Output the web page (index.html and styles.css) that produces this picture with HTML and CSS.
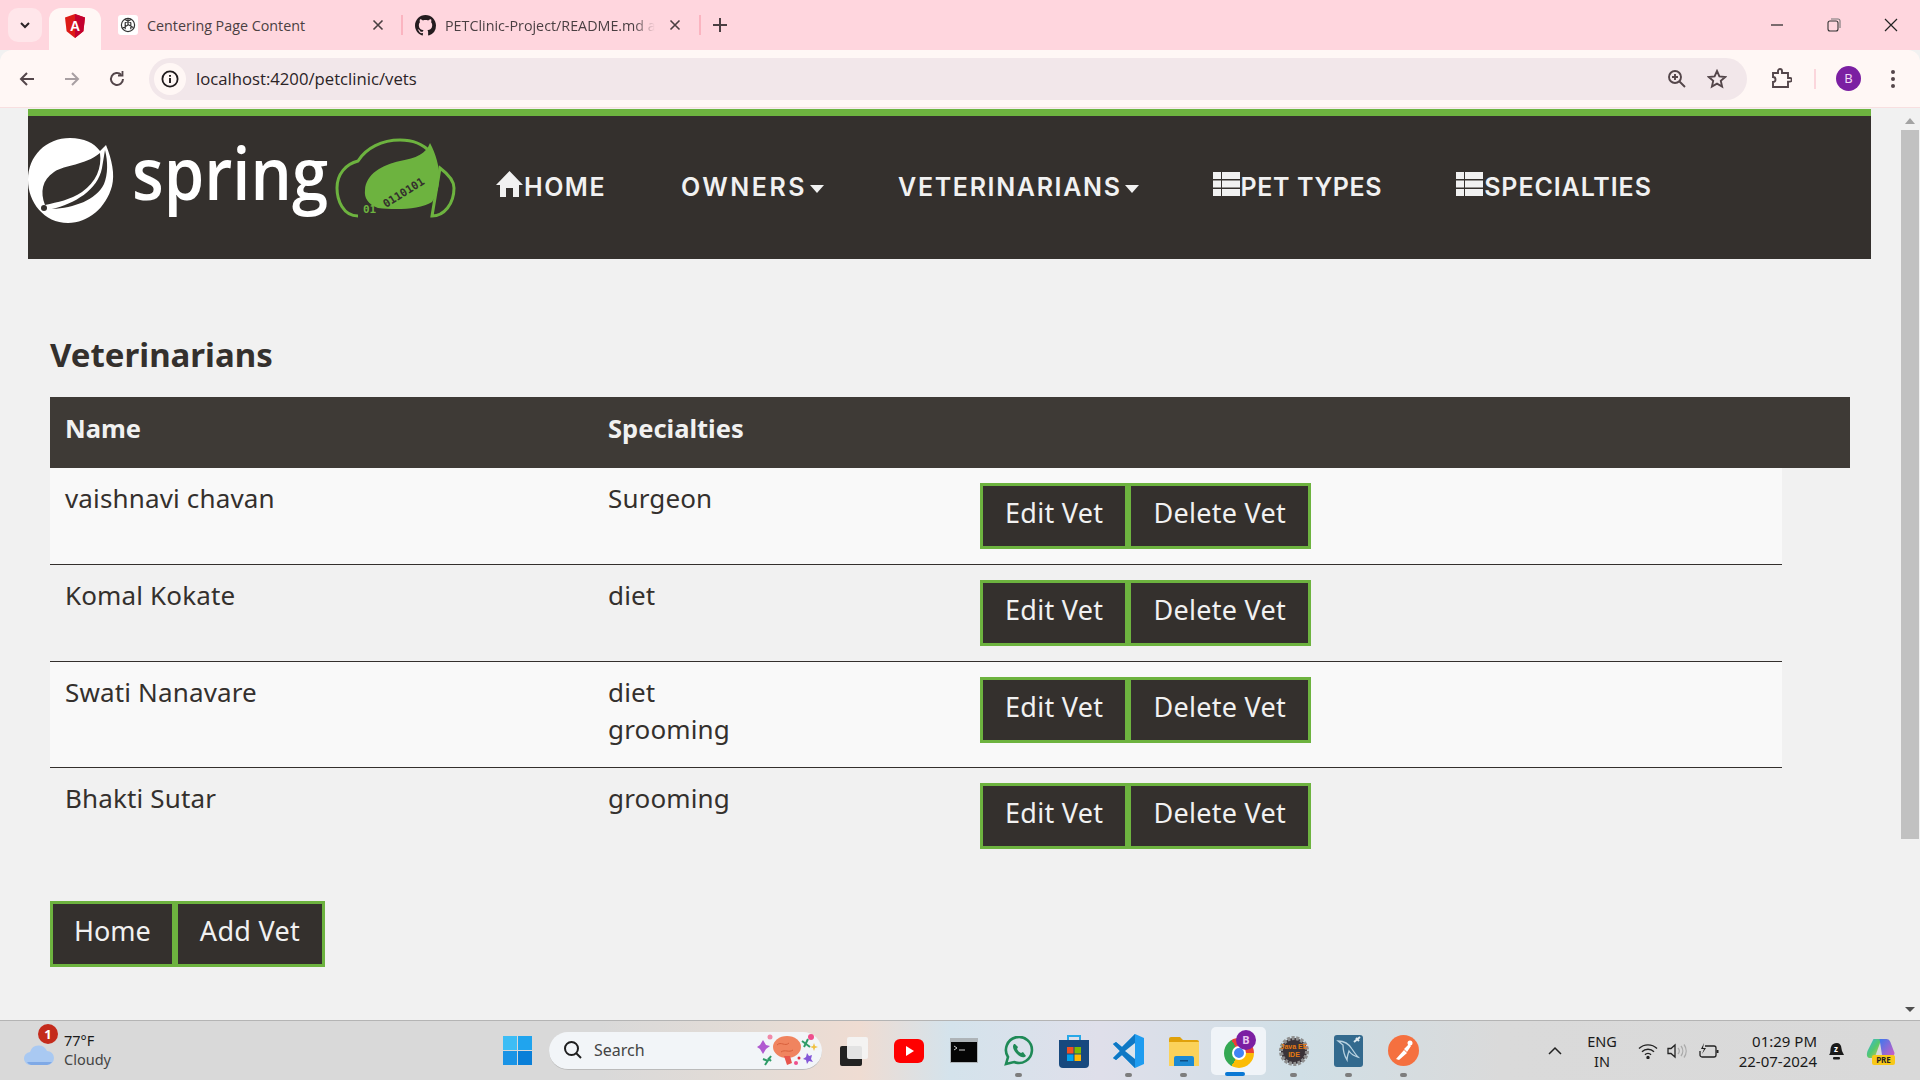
FILE: index.html
```html
<!DOCTYPE html>
<html lang="en">
<head>
    <meta charset="UTF-8">
    <title>Veterinarians</title>
    <link rel="stylesheet" href="styles.css">
</head>
<body>
    <div class="tabstrip">
        <div class="tab-menu">
            <svg width="12" height="8" viewBox="0 0 12 8"><path d="M2 2l4 4 4-4" fill="none" stroke="#2b2326" stroke-width="2"/></svg>
        </div>
        <div class="tab-active">
            <svg width="20" height="24" viewBox="0 0 20 24">
                <path d="M10 0L0 3.6l1.6 13.6L10 24l8.4-6.8L20 3.6z" fill="#dd1b16"/>
                <path d="M10 0v24l8.4-6.8L20 3.6z" fill="#c3002f"/>
                <text x="10" y="17" class="angular-a">A</text>
            </svg>
        </div>
        <div class="tab tab-first">
            <div class="favicon-box">
                <svg width="16" height="16" viewBox="0 0 16 16" fill="none" stroke="#333" stroke-width="1.2">
                    <circle cx="8" cy="8" r="6.6"/>
                    <path d="M8 1.4v6l5.2 3M8 8l-5.2 3M5 2.5l5.8 3.3v6.4M11 2.5L5.2 5.8v6.4"/>
                </svg>
            </div>
            <span class="tab-title">Centering Page Content</span>
            <svg class="tab-close" width="12" height="12" viewBox="0 0 12 12"><path d="M1.5 1.5l9 9M10.5 1.5l-9 9" stroke="#4a3f42" stroke-width="1.6"/></svg>
        </div>
        <div class="tab-divider"></div>
        <div class="tab tab-second">
            <svg width="21" height="21" viewBox="0 0 16 16"><path fill="#241c1f" d="M8 0C3.58 0 0 3.58 0 8c0 3.54 2.29 6.53 5.47 7.59.4.07.55-.17.55-.38 0-.19-.01-.82-.01-1.49-2.01.37-2.53-.49-2.69-.94-.09-.23-.48-.94-.82-1.13-.28-.15-.68-.52-.01-.53.63-.01 1.08.58 1.23.82.72 1.21 1.87.87 2.33.66.07-.52.28-.87.51-1.07-1.78-.2-3.64-.89-3.64-3.95 0-.87.31-1.59.82-2.15-.08-.2-.36-1.02.08-2.12 0 0 .67-.21 2.2.82.64-.18 1.32-.27 2-.27.68 0 1.36.09 2 .27 1.53-1.04 2.2-.82 2.2-.82.44 1.1.16 1.92.08 2.12.51.56.82 1.27.82 2.15 0 3.07-1.87 3.75-3.65 3.95.29.25.54.73.54 1.48 0 1.07-.01 1.93-.01 2.2 0 .21.15.46.55.38A8.013 8.013 0 0016 8c0-4.42-3.58-8-8-8z"/></svg>
            <span class="tab-title tab-title-fade">PETClinic-Project/README.md a</span>
            <svg class="tab-close" width="12" height="12" viewBox="0 0 12 12"><path d="M1.5 1.5l9 9M10.5 1.5l-9 9" stroke="#4a3f42" stroke-width="1.6"/></svg>
        </div>
        <div class="tab-divider"></div>
        <svg class="tab-new" width="14" height="14" viewBox="0 0 14 14"><path d="M7 0v14M0 7h14" stroke="#4a3f42" stroke-width="2"/></svg>
        <div class="window-controls">
            <svg width="14" height="14" viewBox="0 0 14 14"><path d="M1 7h12" stroke="#222" stroke-width="1.2"/></svg>
            <svg width="14" height="14" viewBox="0 0 14 14" fill="none" stroke="#333" stroke-width="1.1"><rect x="1" y="3" width="10" height="10" rx="2"/><path d="M4 1h7a2 2 0 012 2v7" stroke="#777"/></svg>
            <svg width="14" height="14" viewBox="0 0 14 14"><path d="M1 1l12 12M13 1L1 13" stroke="#222" stroke-width="1.2"/></svg>
        </div>
    </div>

    <div class="toolbar">
        <svg class="tool-btn" width="18" height="18" viewBox="0 0 18 18" fill="none" stroke="#54464a" stroke-width="2"><path d="M16 9H3M9 3L3 9l6 6"/></svg>
        <svg class="tool-btn" width="18" height="18" viewBox="0 0 18 18" fill="none" stroke="#a89fa2" stroke-width="2"><path d="M2 9h13M9 3l6 6-6 6"/></svg>
        <svg class="tool-btn" width="18" height="18" viewBox="0 0 18 18" fill="none" stroke="#54464a" stroke-width="2"><path d="M15 9a6 6 0 11-1.8-4.3"/><path d="M14.5 1v4.5H10" stroke-width="1.8"/></svg>
        <div class="omnibox">
            <div class="info-chip">
                <svg width="18" height="18" viewBox="0 0 18 18"><circle cx="9" cy="9" r="7.6" fill="none" stroke="#1f1a1c" stroke-width="1.8"/><path d="M9 8v5M9 5v1.8" stroke="#1f1a1c" stroke-width="1.9"/></svg>
            </div>
            <span class="url">localhost:4200/petclinic/vets</span>
            <svg class="omni-zoom" width="20" height="20" viewBox="0 0 20 20" fill="none" stroke="#54464a" stroke-width="1.9"><circle cx="8" cy="8" r="6"/><path d="M12.5 12.5L18 18M5 8h6M8 5v6"/></svg>
            <svg class="omni-star" width="20" height="20" viewBox="0 0 20 20" fill="none" stroke="#54464a" stroke-width="1.9"><path d="M10 2l2.4 5.4 5.8.6-4.4 3.9 1.3 5.7L10 14.7l-5.1 2.9 1.3-5.7L1.8 8l5.8-.6z"/></svg>
        </div>
        <svg class="puzzle" width="21" height="21" viewBox="0 0 21 21" fill="none" stroke="#54464a" stroke-width="1.9"><path d="M2 5h5V3a2 2 0 014 0v2h6v5h2a1.8 1.8 0 010 3.6h-2V19H2v-5a2.5 2.5 0 000-5z"/></svg>
        <div class="toolbar-divider"></div>
        <div class="avatar">B</div>
        <svg class="kebab" width="6" height="20" viewBox="0 0 6 20" fill="#54464a"><circle cx="3" cy="3" r="2"/><circle cx="3" cy="10" r="2"/><circle cx="3" cy="17" r="2"/></svg>
    </div>

    <div class="viewport">
        <div class="page">
            <nav class="navbar">
                <svg class="logo" width="427" height="85" viewBox="0 0 427 85">
                    <path fill="#fff" d="M42 0C56 0 66 5 72 13L78 7C84 22 87 36 84 48 78 70 60 85 40 85 16 85 0 64 0 42 0 18 18 0 42 0Z"/>
                    <path fill="#34302d" d="M17 67C12 54 14 42 26 34 38 26 56 28 72 15 74 30 68 44 54 54 42 62 30 64 17 67Z"/>
                    <path fill="#34302d" d="M77 12C80 24 80 36 76 46 68 62 46 70 24 71 46 66 70 52 74 30 75 24 76 18 77 12Z"/>
                    <circle cx="16" cy="70" r="3" fill="#34302d"/>
                    <text x="104" y="62" class="logo-word" textLength="196" lengthAdjust="spacingAndGlyphs">spring</text>
                    <path fill="none" stroke="#6db33f" stroke-width="3" d="M330 78C315 78 309 62 309 50 309 36 318 26 330 23 338 10 354 2 372 2 385 2 395 6 402 14M412 30C420 36 426 42 426 50 426 66 416 78 404 78Z"/>
                    <path fill="#6db33f" d="M402 5C398 16 388 20 372 23 354 27 338 36 337 52 336 60 340 66 350 70 366 72 392 72 404 64 414 50 414 28 402 5Z"/>
                    <text x="335" y="75" class="logo-bits logo-bits-out">01</text>
                    <text x="0" y="0" class="logo-bits logo-bits-in" transform="translate(358 70) rotate(-32)">0110101</text>
                </svg>
                <a class="nav-item nav-home">
                    <svg class="nav-icon" width="27" height="26" viewBox="0 0 27 26"><path fill="#f1f1f1" d="M13.5 0L27 14h-4v12h-6v-9h-7v9H4V14H0z"/></svg>HOME
                </a>
                <a class="nav-item nav-owners">OWNERS<span class="caret"></span></a>
                <a class="nav-item nav-vets">VETERINARIANS<span class="caret"></span></a>
                <a class="nav-item nav-types">
                    <svg class="nav-icon" width="27" height="24" viewBox="0 0 27 24" fill="#f1f1f1"><rect width="8" height="7"/><rect x="9" width="18" height="7"/><rect y="8.5" width="8" height="7"/><rect x="9" y="8.5" width="18" height="7"/><rect y="17" width="8" height="7"/><rect x="9" y="17" width="18" height="7"/></svg>PET TYPES
                </a>
                <a class="nav-item nav-specs">
                    <svg class="nav-icon" width="27" height="24" viewBox="0 0 27 24" fill="#f1f1f1"><rect width="8" height="7"/><rect x="9" width="18" height="7"/><rect y="8.5" width="8" height="7"/><rect x="9" y="8.5" width="18" height="7"/><rect y="17" width="8" height="7"/><rect x="9" y="17" width="18" height="7"/></svg>SPECIALTIES
                </a>
            </nav>

            <div class="content">
                <h2 class="page-title">Veterinarians</h2>
                <table class="vets-table">
                    <thead>
                        <tr>
                            <th class="col-name">Name</th>
                            <th class="col-spec">Specialties</th>
                            <th class="col-actions"></th>
                            <th class="col-extra"></th>
                        </tr>
                    </thead>
                    <tbody>
                        <tr>
                            <td>vaishnavi chavan</td>
                            <td>Surgeon</td>
                            <td class="actions"><button class="btn">Edit Vet</button><button class="btn">Delete Vet</button></td>
                        </tr>
                        <tr>
                            <td>Komal Kokate</td>
                            <td>diet</td>
                            <td class="actions"><button class="btn">Edit Vet</button><button class="btn">Delete Vet</button></td>
                        </tr>
                        <tr>
                            <td>Swati Nanavare</td>
                            <td>diet<br>grooming</td>
                            <td class="actions"><button class="btn">Edit Vet</button><button class="btn">Delete Vet</button></td>
                        </tr>
                        <tr>
                            <td>Bhakti Sutar</td>
                            <td>grooming</td>
                            <td class="actions"><button class="btn">Edit Vet</button><button class="btn">Delete Vet</button></td>
                        </tr>
                    </tbody>
                </table>
                <div class="page-actions">
                    <button class="btn btn-home">Home</button><button class="btn">Add Vet</button>
                </div>
            </div>
        </div>
        <div class="scrollbar">
            <span class="arrow-up"></span>
            <div class="thumb"></div>
            <span class="arrow-down"></span>
        </div>
    </div>

    <div class="taskbar">
        <div class="weather">
            <div class="weather-icon">
                <svg width="30" height="20" viewBox="0 0 30 20"><path fill="#a9c9f2" d="M7 20a6.500 6.500 0 01-1-13 9 9 0 0117-1 7 7 0 010 14z"/><path fill="#7fa9e6" d="M3 17h25a7 7 0 01-5 3H7a7 7 0 01-4-3z"/></svg>
                <span class="weather-badge">1</span>
            </div>
            <div class="weather-text">
                <div class="weather-temp">77°F</div>
                <div class="weather-desc">Cloudy</div>
            </div>
        </div>
        <svg class="start" width="29" height="29" viewBox="0 0 29 29">
            <rect width="14" height="14" fill="#3dbdf5"/><rect x="15" width="14" height="14" fill="#20a4ee"/>
            <rect y="15" width="14" height="14" fill="#1a94e6"/><rect x="15" y="15" width="14" height="14" fill="#0a7fd8"/>
        </svg>
        <div class="search">
            <svg width="20" height="20" viewBox="0 0 20 20" fill="none" stroke="#1e1e1e" stroke-width="2"><circle cx="8.500" cy="8.500" r="6.500"/><path d="M13 13l5 5"/></svg>
            <span class="search-label">Search</span>
            <svg class="search-art" width="62" height="34" viewBox="0 0 62 34">
                <ellipse cx="30" cy="14" rx="14" ry="11" fill="#f0845f"/>
                <path d="M20 12c4-4 8 2 12-2M24 19c4-3 8 1 12-2" stroke="#d8603c" fill="none"/>
                <path d="M27 23l6 0 2 7-5 2z" fill="#e8554c"/>
                <path d="M3 12l3-5 3 5 4 1-4 3-3 5-3-5-3-2z" fill="#b05ad0"/>
                <circle cx="13" cy="4" r="2.500" fill="#f08aa8"/>
                <path d="M8 32l6-9M6 26l5 2M14 28l-3-3" stroke="#2f9c68" stroke-width="2" fill="none"/>
                <path d="M45 8l8 6M47 14l4-8" stroke="#2f9c68" stroke-width="2"/>
                <circle cx="54" cy="4" r="3" fill="#ee4f8c"/>
                <path d="M57 10l1 3 3 1-3 1-1 3-1-3-3-1 3-1z" fill="#f0c040"/>
                <path d="M50 20l2 3 3-1-1 4 2 3-4-1-2 3-1-4-3-1 3-2z" fill="#8458d8"/>
                <circle cx="39" cy="30" r="2" fill="#ee4f8c"/>
                <circle cx="42" cy="25" r="1.500" fill="#e03040"/>
            </svg>
        </div>
        <div class="apps">
            <div class="app">
                <svg width="30" height="30" viewBox="0 0 30 30"><rect x="1" y="10" width="22" height="20" rx="2" fill="#222"/><rect x="8" y="1" width="21" height="22" rx="2" fill="#f4f4f4" opacity=".92"/></svg>
            </div>
            <div class="app">
                <svg width="30" height="24" viewBox="0 0 30 24"><rect width="30" height="24" rx="6" fill="#f00"/><path d="M12 7l8 5-8 5z" fill="#fff"/></svg>
            </div>
            <div class="app">
                <svg width="28" height="25" viewBox="0 0 28 25"><rect width="28" height="25" fill="#aeb4b8"/><rect x="1" y="4" width="26" height="20" fill="#050505"/><path d="M4 8l3 2-3 2M9 12h6" stroke="#ccc" fill="none"/></svg>
            </div>
            <div class="app running">
                <svg width="30" height="30" viewBox="0 0 30 30"><path d="M2 28l2-7A13 13 0 1110 26z" fill="none" stroke="#1f8a57" stroke-width="2.600"/><path d="M10 8c-2 2-1 6 3 10s7 4 9 2l-3-4-2 1c-2-1-3-2-4-4l1-2-3-3z" fill="#1f8a57"/></svg>
            </div>
            <div class="app">
                <svg width="30" height="34" viewBox="0 0 30 34"><path d="M9 6V2h12v4" fill="none" stroke="#28a8e8" stroke-width="2"/><path d="M0 6h30v24a4 4 0 01-4 4H4a4 4 0 01-4-4z" fill="#17497e"/><rect x="8" y="13" width="6.500" height="6.500" fill="#f25022"/><rect x="15.500" y="13" width="6.500" height="6.500" fill="#7fba00"/><rect x="8" y="20.500" width="6.500" height="6.500" fill="#00a4ef"/><rect x="15.500" y="20.500" width="6.500" height="6.500" fill="#ffb900"/></svg>
            </div>
            <div class="app running">
                <svg width="31" height="34" viewBox="0 0 31 34"><path d="M22 0l9 4v26l-9 4-13-13-6 5-3-2 7-7-7-7 3-2 6 5z" fill="#1f9cf0"/><path d="M22 0v34L9 21l-6 5-3-2 7-7-7-7 3-2 6 5z" fill="#0f78c4"/><path d="M22 9v16l-10-8z" fill="#dbe4ec"/></svg>
            </div>
            <div class="app running">
                <svg width="30" height="30" viewBox="0 0 30 30"><path d="M0 3a2 2 0 012-2h9l3 3h14a2 2 0 012 2v4H0z" fill="#e0a10a"/><path d="M0 6h30v24H0z" fill="#fbd25a"/><path d="M5 22a2 2 0 012-2h16a2 2 0 012 2v8H5z" fill="#1b8ad4"/><rect x="11" y="24" width="8" height="1.500" fill="#0c4f86"/></svg>
            </div>
            <div class="app app-active">
                <div class="chrome-icon"><span class="chrome-core"></span></div>
                <span class="chrome-badge">B</span>
            </div>
            <div class="app running">
                <svg width="30" height="30" viewBox="0 0 30 30"><circle cx="15" cy="15" r="13" fill="#3a3338" stroke="#8e8e8e" stroke-width="4" stroke-dasharray="3 1.500"/><text x="15" y="13" class="java-label">Java EE</text><text x="15" y="21" class="java-label">IDE</text></svg>
            </div>
            <div class="app running">
                <svg width="29" height="32" viewBox="0 0 29 32"><rect width="29" height="32" rx="3" fill="#336a8e"/><path d="M4 6c6 0 11 3 14 8 2 3 4 6 6 8-4-1-7-3-9-6-1 3-2 6-2 9-3-5-4-11-4-15z" fill="none" stroke="#b9d2e0" stroke-width="1.300"/><path d="M20 7l6-5M22 3l3 3" stroke="#dfe9ef" stroke-width="2"/></svg>
            </div>
            <div class="app running">
                <svg width="31" height="31" viewBox="0 0 31 31"><circle cx="15.500" cy="15.500" r="15.500" fill="#f5703f"/><path d="M8 24l8-9 3 3-8 7zM16 14l5-5 2 2-4 6z" fill="#fff"/><circle cx="22" cy="8" r="2.500" fill="#fff"/></svg>
            </div>
        </div>
        <div class="tray">
            <svg class="tray-chevron" width="14" height="9" viewBox="0 0 14 9"><path d="M1 8l6-6 6 6" fill="none" stroke="#222" stroke-width="1.500"/></svg>
            <div class="lang">ENG<br>IN</div>
            <svg class="tray-wifi" width="20" height="16" viewBox="0 0 20 16" fill="none" stroke="#222" stroke-width="1.400"><path d="M1 5.500a13 13 0 0118 0M4 8.700a8.500 8.500 0 0112 0M7 11.700a4 4 0 016 0"/><circle cx="10" cy="14.500" r="1" fill="#222"/></svg>
            <svg class="tray-volume" width="20" height="16" viewBox="0 0 20 16" fill="none" stroke="#222" stroke-width="1.300"><path d="M1 5.500h3l4-3.500v12L4 10.500H1z"/><path d="M11 5a4.500 4.500 0 010 6M14 3a8 8 0 010 10M17 1.500a11 11 0 010 13" stroke="#aaa"/></svg>
            <svg class="tray-battery" width="20" height="16" viewBox="0 0 20 16" fill="none" stroke="#222" stroke-width="1.300"><path d="M6 3h9a2 2 0 012 2v7a2 2 0 01-2 2H3a2 2 0 01-2-2V8"/><path d="M18.500 7v3" stroke-width="2"/><path d="M5 0L2 6h3l-2 5 4-6H4z" fill="#222" stroke="none"/></svg>
            <div class="clock">01:29 PM<br>22-07-2024</div>
            <svg class="tray-bell" width="17" height="20" viewBox="0 0 17 20"><path d="M1 14c2-2 1-5 2-8s3-4 6-4c2 0 3 1 4 3l1 5 2 4z" fill="#1a1a1a"/><rect x="5" y="16" width="7" height="2.500" rx="1" fill="#1a1a1a"/><text x="8" y="11" class="bell-z">z</text></svg>
            <div class="copilot">
                <svg width="29" height="21" viewBox="0 0 28 21"><defs><linearGradient id="cpA" x1="0" y1="0" x2="1" y2="1"><stop offset="0" stop-color="#32b4e8"/><stop offset=".5" stop-color="#54c86e"/><stop offset="1" stop-color="#e8c83c"/></linearGradient><linearGradient id="cpB" x1="0" y1="0" x2="1" y2="1"><stop offset="0" stop-color="#3c78ee"/><stop offset="1" stop-color="#d85cc0"/></linearGradient></defs><path d="M7 2h8L8 21H3C0 21 0 17 1 14z" fill="url(#cpA)"/><path d="M13 2h7c3 0 4 3 5 6l3 8c0 3-3 5-5 5h-7z" fill="url(#cpB)"/></svg>
                <span class="copilot-pre">PRE</span>
            </div>
        </div>
    </div>
</body>
</html>
```

FILE: styles.css
```css
* {
    box-sizing: border-box;
}
html, body {
    margin: 0;
    height: 100%;
}
body {
    display: flex;
    flex-direction: column;
    width: 1920px;
    height: 1080px;
    overflow: hidden;
    font-family: "Noto Sans", sans-serif;
    background-color: #f1f1f1;
}

/* browser tabs */
.tabstrip {
    display: flex;
    align-items: center;
    height: 50px;
    padding-left: 8px;
    background-color: #ffd6de;
}
.tab-menu {
    display: flex;
    align-items: center;
    justify-content: center;
    width: 34px;
    height: 34px;
    border-radius: 10px;
    background-color: #ffe6ea;
}
.tab-active {
    display: flex;
    align-items: center;
    justify-content: center;
    align-self: flex-end;
    width: 52px;
    height: 42px;
    margin-left: 7px;
    padding-bottom: 6px;
    border-radius: 12px 12px 0 0;
    background-color: #fff7f5;
}
.angular-a {
    font-family: "Liberation Sans", sans-serif;
    font-size: 14px;
    font-weight: 700;
    fill: #fff;
    text-anchor: middle;
}
.tab {
    display: flex;
    align-items: center;
}
.tab-first {
    width: 283px;
    margin-left: 17px;
}
.favicon-box {
    display: flex;
    align-items: center;
    justify-content: center;
    width: 20px;
    height: 20px;
    border-radius: 3px;
    background-color: #fff;
}
.tab-title {
    margin-left: 9px;
    font-family: "Open Sans", sans-serif;
    font-size: 14.3px;
    color: #4a3f42;
    white-space: nowrap;
}
.tab-first .tab-close {
    margin-left: auto;
    margin-right: 17px;
}
.tab-divider {
    width: 2px;
    height: 20px;
    background-color: #fbb4c0;
}
.tab-second {
    width: 284px;
    margin-left: 12px;
}
.tab-second .tab-title {
    width: 210px;
    -webkit-mask-image: linear-gradient(to right, #000 90%, transparent);
    mask-image: linear-gradient(to right, #000 90%, transparent);
}
.tab-second .tab-close {
    margin-left: 14px;
}
.tab-new {
    margin-left: 12px;
}
.window-controls {
    display: flex;
    gap: 43px;
    margin-left: auto;
    margin-right: 22px;
}

/* browser toolbar */
.toolbar {
    display: flex;
    align-items: center;
    height: 58px;
    padding-left: 18px;
    border-bottom: 1px solid #f8dfe0;
    border-radius: 12px 12px 0 0;
    background-color: #fff7f5;
}
.tool-btn {
    margin-right: 27px;
}
.tool-btn:nth-child(3) {
    margin-right: 23px;
}
.omnibox {
    display: flex;
    align-items: center;
    width: 1598px;
    height: 42px;
    padding-left: 5px;
    border-radius: 21px;
    background-color: #f2e7ea;
}
.info-chip {
    display: flex;
    align-items: center;
    justify-content: center;
    width: 32px;
    height: 32px;
    border-radius: 50%;
    background-color: #fff7f5;
}
.url {
    margin-left: 10px;
    font-family: "Open Sans", sans-serif;
    font-size: 16.7px;
    color: #2b2326;
}
.omni-zoom {
    margin-left: auto;
}
.omni-star {
    margin-left: 20px;
    margin-right: 20px;
}
.puzzle {
    margin-left: 24px;
}
.toolbar-divider {
    width: 2px;
    height: 20px;
    margin-left: 22px;
    background-color: #fbd6dc;
}
.avatar {
    width: 25px;
    height: 25px;
    margin-left: 20px;
    border-radius: 50%;
    font-size: 13px;
    line-height: 25px;
    text-align: center;
    color: #f0d8f4;
    background-color: #7b1fa2;
}
.kebab {
    margin-left: 29px;
}

/* page */
.viewport {
    display: flex;
    flex: 1;
    min-height: 0;
}
.page {
    flex: 1;
    padding: 1px 29px 0 28px;
}
.navbar {
    display: flex;
    height: 150px;
    border-top: 7px solid #6db33f;
    background-color: #34302d;
}
.logo {
    flex-shrink: 0;
    margin-top: 22px;
    margin-right: 3px;
    overflow: visible;
}
.nav-item {
    display: flex;
    align-items: center;
    gap: 1px;
    height: 142px;
    padding: 0 37px;
    font-family: "Inter", sans-serif;
    font-size: 25px;
    font-weight: 600;
    letter-spacing: 1.5px;
    color: #f1f1f1;
    white-space: nowrap;
}
.nav-home {
    padding-left: 38px;
    padding-right: 38px;
}
.nav-owners {
    letter-spacing: 2.5px;
}
.nav-vets {
    letter-spacing: 1.65px;
}
.nav-types {
    letter-spacing: 0.6px;
}
.nav-specs {
    letter-spacing: 0.9px;
}
.nav-icon {
    flex-shrink: 0;
    margin-top: -6px;
}
.caret {
    width: 0;
    height: 0;
    margin-left: 2px;
    margin-top: 4px;
    border-top: 8px solid #f1f1f1;
    border-left: 7px solid transparent;
    border-right: 7px solid transparent;
}
.content {
    padding: 0 21px 0 22px;
}
.page-title {
    height: 40px;
    margin: 76px 0 22px;
    font-size: 33px;
    font-weight: 700;
    line-height: 40px;
    color: #34302d;
}
.vets-table {
    width: 1800px;
    border-collapse: separate;
    border-spacing: 0;
    table-layout: fixed;
    font-size: 26px;
    letter-spacing: 0.15px;
    color: #34302d;
}
.vets-table th {
    height: 71px;
    padding: 0 15px 10px;
    font-size: 25.5px;
    font-weight: 700;
    letter-spacing: 0;
    text-align: left;
    color: #f1f1f1;
    background-color: #3e3a36;
}
.col-name {
    width: 543px;
}
.col-spec {
    width: 372px;
}
.col-extra {
    width: 68px;
}
.vets-table td {
    padding: 12px 15px 19px;
    line-height: 37px;
    vertical-align: top;
    border-bottom: 1px solid #34302d;
}
.vets-table tbody tr:nth-child(odd) td {
    background-color: #f9f9f9;
}
.vets-table tbody tr:last-child td {
    border-bottom: none;
}
.vets-table td.actions {
    padding: 15px;
    font-size: 0;
}
.btn {
    height: 66px;
    padding: 0 22px 8px;
    border: 3px solid #6db33f;
    font-family: "Noto Sans", sans-serif;
    font-size: 27px;
    letter-spacing: 0.3px;
    color: #f1f1f1;
    background-color: #34302d;
}
.btn-home {
    padding: 0 21px 8px;
    letter-spacing: 0;
}
.page-actions {
    margin-top: 37px;
    font-size: 0;
}

/* page scrollbar */
.scrollbar {
    display: flex;
    flex-direction: column;
    align-items: center;
    width: 20px;
    background-color: #f1f1f1;
}
.arrow-up, .arrow-down {
    width: 0;
    height: 0;
    margin: 8px 0;
    border-left: 5px solid transparent;
    border-right: 5px solid transparent;
}
.arrow-up {
    margin-top: 10px;
    margin-bottom: 6px;
    border-bottom: 6px solid #a3a3a3;
}
.arrow-down {
    margin-top: auto;
    border-top: 5px solid #505050;
}
.thumb {
    width: 18px;
    height: 709px;
    background-color: #c1c1c1;
}

/* windows taskbar */
.taskbar {
    display: flex;
    align-items: center;
    height: 60px;
    border-top: 1px solid #b4b4b4;
    background: linear-gradient(to right, #d9d9d9 0, #d9d9d9 600px, #e4dcd6 760px, #efdcd2 860px, #d4e3ec 950px, #dfdfea 1100px, #d0dfe6 1300px, #dadada 1500px, #d9d9d9 100%);
}
.weather {
    display: flex;
    align-items: center;
    width: 503px;
    padding-left: 24px;
}
.weather-icon {
    position: relative;
    width: 40px;
    height: 30px;
    padding-top: 9px;
}
.weather-badge {
    position: absolute;
    top: -12px;
    left: 14px;
    width: 20px;
    height: 20px;
    border-radius: 50%;
    font-size: 13px;
    font-weight: 700;
    line-height: 20px;
    text-align: center;
    color: #fff;
    background-color: #c42b1c;
}
.weather-text {
    margin-top: -1px;
}
.weather-temp, .weather-desc {
    font-size: 14.5px;
    line-height: 19px;
    color: #1a1a1a;
}
.weather-desc {
    color: #444;
}
.search {
    display: flex;
    align-items: center;
    width: 273px;
    height: 38px;
    margin-left: 17px;
    padding-left: 14px;
    border-radius: 19px;
    border-bottom: 1px solid #bbb;
    background-color: #f2f5f8;
}
.search-label {
    margin-left: 11px;
    font-size: 16px;
    color: #444;
}
.search-art {
    margin-left: auto;
    margin-right: 3px;
}
.apps {
    display: flex;
    margin-left: 4px;
}
.app {
    position: relative;
    display: flex;
    align-items: center;
    justify-content: center;
    width: 55px;
    height: 48px;
}
.running::after {
    content: "";
    position: absolute;
    bottom: -2px;
    left: 24px;
    width: 7px;
    height: 4px;
    border-radius: 2px;
    background-color: #7d7d7d;
}
.app-active {
    border-radius: 5px;
    background-color: #f0f4f8;
}
.app-active::after {
    content: "";
    position: absolute;
    bottom: -1px;
    left: 14px;
    width: 20px;
    height: 4px;
    border-radius: 2px;
    background-color: #0a78d4;
}
.chrome-icon {
    display: flex;
    align-items: center;
    justify-content: center;
    width: 30px;
    height: 30px;
    margin-top: 4px;
    border-radius: 50%;
    background: conic-gradient(from 30deg, #e94335 0 60deg, #fbbc05 60deg 180deg, #34a853 180deg 300deg, #e94335 300deg);
}
.chrome-core {
    width: 14px;
    height: 14px;
    border: 2px solid #fff;
    border-radius: 50%;
    background-color: #4285f4;
}
.chrome-badge {
    position: absolute;
    top: 3px;
    left: 25px;
    width: 20px;
    height: 20px;
    border-radius: 50%;
    font-size: 11px;
    font-weight: 700;
    line-height: 20px;
    text-align: center;
    color: #e8c8f0;
    background-color: #7b1fa2;
}
.java-label {
    font-family: "Liberation Sans", sans-serif;
    font-size: 7px;
    font-weight: 700;
    fill: #e87a10;
    text-anchor: middle;
}
.tray {
    display: flex;
    align-items: center;
    margin-left: auto;
    padding-right: 25px;
}
.tray-chevron {
    margin-right: 2px;
}
.lang {
    width: 40px;
    margin-left: 18px;
    font-size: 14.5px;
    line-height: 20px;
    text-align: center;
    color: #1a1a1a;
}
.tray-wifi {
    margin-left: 16px;
}
.tray-volume {
    margin-left: 9px;
}
.tray-battery {
    margin-left: 12px;
}
.clock {
    width: 90px;
    margin-left: 8px;
    font-size: 15px;
    line-height: 20px;
    text-align: right;
    color: #1a1a1a;
}
.tray-bell {
    margin-left: 11px;
}
.bell-z {
    font-size: 8px;
    font-weight: 700;
    fill: #fff;
    text-anchor: middle;
}
.copilot {
    position: relative;
    height: 28px;
    margin-left: 21px;
}
.copilot-pre {
    position: absolute;
    top: 18px;
    left: 6px;
    width: 23px;
    height: 10px;
    border-radius: 2px;
    font-size: 8px;
    font-weight: 700;
    line-height: 10px;
    text-align: center;
    color: #222;
    background-color: #f8c818;
}

/* logo text */
.logo-word {
    font-family: "Open Sans", sans-serif;
    font-size: 72px;
    font-weight: 600;
    fill: #fff;
}
.logo-bits {
    font-family: "DejaVu Sans Mono", monospace;
    font-size: 11px;
    font-weight: 700;
}
.logo-bits-out {
    fill: #6db33f;
}
.logo-bits-in {
    fill: #34302d;
}
```
